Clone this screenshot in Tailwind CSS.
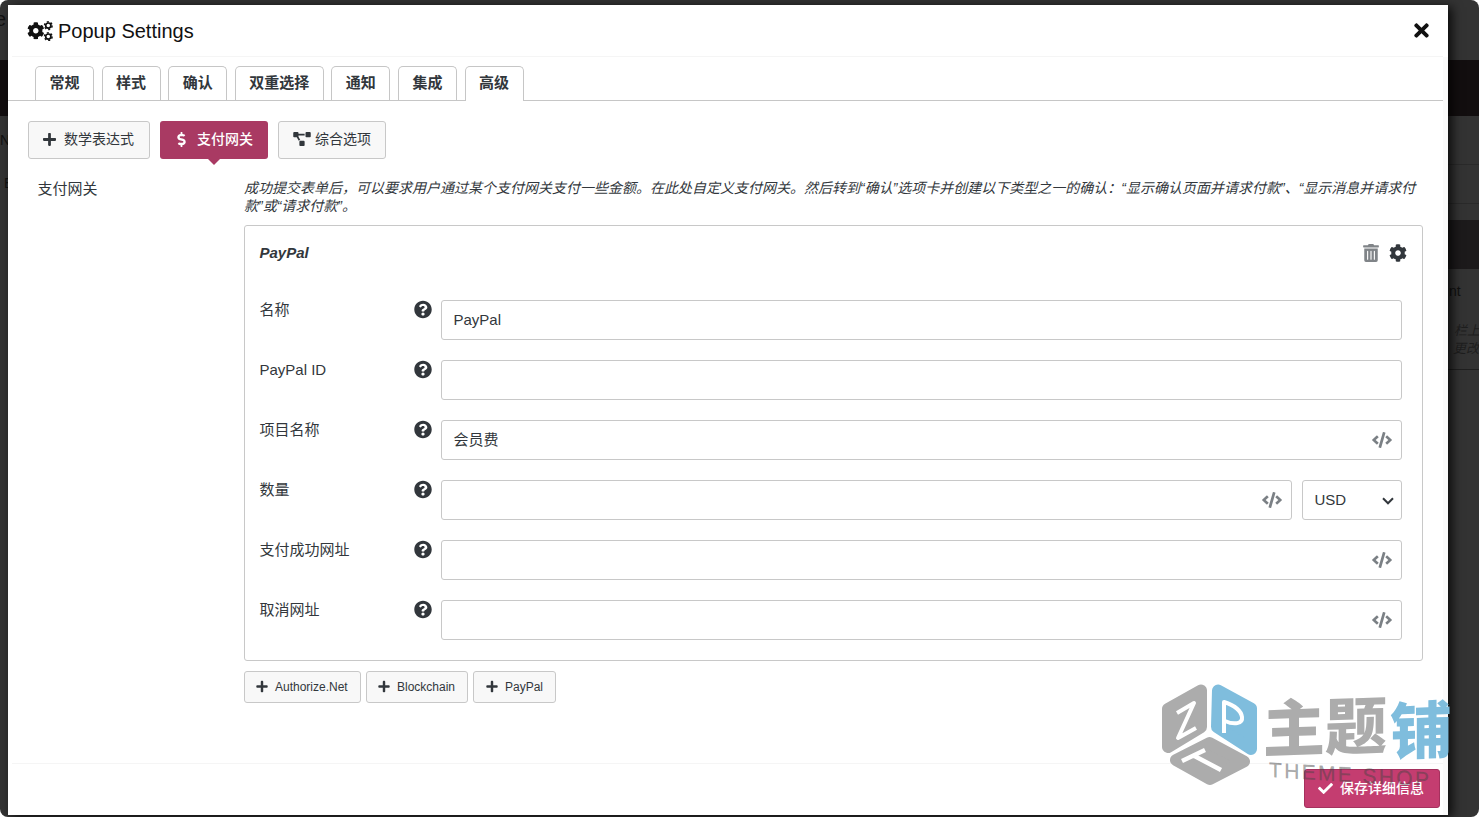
<!DOCTYPE html>
<html lang="zh-CN">
<head>
  <meta charset="UTF-8" />
  <meta name="viewport" content="width=device-width, initial-scale=1.0"/>
  <title>Popup Settings</title>
  <script src="https://cdn.jsdelivr.net/npm/@tailwindcss/browser@4"></script>
</head>
<body class="bg-white h-screen overflow-hidden text-[15px] text-[#32373c] font-['Liberation_Sans','Noto_Sans_CJK_SC',sans-serif]">

<!-- ICONS -->
<svg class="hidden" xmlns="http://www.w3.org/2000/svg">
  <symbol id="plus" viewBox="0 0 448 512"><path d="M416 208H272V64c0-17.67-14.33-32-32-32h-32c-17.67 0-32 14.33-32 32v144H32c-17.67 0-32 14.33-32 32v32c0 17.67 14.33 32 32 32h144v144c0 17.67 14.33 32 32 32h32c17.67 0 32-14.33 32-32V304h144c17.67 0 32-14.33 32-32v-32c0-17.67-14.33-32-32-32z"/></symbol>
  <symbol id="check" viewBox="0 0 512 512"><path d="M173.898 439.404l-166.4-166.4c-9.997-9.997-9.997-26.206 0-36.204l36.203-36.204c9.997-9.998 26.207-9.998 36.204 0L192 312.69 432.095 72.596c9.997-9.997 26.207-9.997 36.204 0l36.203 36.204c9.997 9.997 9.997 26.206 0 36.204l-294.4 294.401c-9.998 9.997-26.207 9.997-36.204-.001z"/></symbol>
  <symbol id="times" viewBox="0 0 352 512"><path d="M242.72 256l100.07-100.07c12.28-12.28 12.28-32.19 0-44.48l-22.24-22.24c-12.28-12.28-32.19-12.28-44.48 0L176 189.28 75.93 89.21c-12.28-12.28-32.19-12.28-44.48 0L9.21 111.45c-12.28 12.28-12.28 32.19 0 44.48L109.28 256 9.21 356.07c-12.28 12.28-12.28 32.19 0 44.48l22.24 22.24c12.28 12.28 32.2 12.28 44.48 0L176 322.72l100.07 100.07c12.28 12.28 32.2 12.28 44.48 0l22.24-22.24c12.28-12.28 12.28-32.19 0-44.48L242.72 256z"/></symbol>
  <symbol id="help" viewBox="0 0 512 512"><path d="M504 256c0 136.997-111.043 248-248 248S8 392.997 8 256C8 119.083 119.043 8 256 8s248 111.083 248 248zM262.655 90c-54.497 0-89.255 22.957-116.549 63.758-3.536 5.286-2.353 12.415 2.715 16.258l34.699 26.31c5.205 3.947 12.621 3.008 16.665-2.122 17.864-22.658 30.113-35.797 57.303-35.797 20.429 0 45.698 13.148 45.698 32.958 0 14.976-12.363 22.667-32.534 33.976C247.128 238.528 216 254.941 216 296v4c0 6.627 5.373 12 12 12h56c6.627 0 12-5.373 12-12v-1.333c0-28.462 83.186-29.647 83.186-106.667 0-58.002-60.165-102-116.531-102zM256 338c-25.365 0-46 20.635-46 46 0 25.364 20.635 46 46 46s46-20.636 46-46c0-25.365-20.635-46-46-46z"/></symbol>
  <symbol id="cog" viewBox="0 0 512 512"><path d="M487.4 315.7l-42.6-24.6c4.3-23.2 4.3-47 0-70.2l42.6-24.6c4.9-2.8 7.1-8.6 5.5-14-11.1-35.6-30-67.8-54.7-94.6-3.8-4.1-10-5.1-14.8-2.3L380.8 110c-17.9-15.4-38.5-27.3-60.8-35.1V25.8c0-5.6-3.9-10.5-9.4-11.7-36.7-8.2-74.3-7.8-109.2 0-5.5 1.2-9.4 6.1-9.4 11.7V75c-22.2 7.9-42.8 19.8-60.8 35.1L88.7 85.5c-4.9-2.8-11-1.9-14.8 2.3-24.7 26.7-43.6 58.9-54.7 94.6-1.7 5.4.6 11.2 5.5 14L67.3 221c-4.3 23.2-4.3 47 0 70.2l-42.6 24.6c-4.9 2.8-7.1 8.6-5.5 14 11.1 35.6 30 67.8 54.7 94.6 3.8 4.1 10 5.1 14.8 2.3l42.6-24.6c17.9 15.4 38.5 27.3 60.8 35.1v49.2c0 5.6 3.9 10.5 9.4 11.7 36.7 8.2 74.3 7.8 109.2 0 5.5-1.2 9.4-6.1 9.4-11.7v-49.2c22.2-7.9 42.8-19.8 60.8-35.1l42.6 24.6c4.9 2.8 11 1.9 14.8-2.3 24.7-26.7 43.6-58.9 54.7-94.6 1.5-5.5-.7-11.3-5.6-14.1zM256 336c-44.1 0-80-35.9-80-80s35.9-80 80-80 80 35.9 80 80-35.9 80-80 80z"/></symbol>
  <symbol id="dollar" viewBox="0 0 288 512"><path d="M209.2 233.4l-108-31.6C88.7 198.2 80 186.5 80 173.5c0-16.3 13.2-29.5 29.5-29.5h66.3c12.2 0 24.2 3.7 34.2 10.5 6.1 4.1 14.3 3.1 19.5-2l34.8-34c7.1-6.9 6.1-18.4-1.8-24.5C238 74.8 207.4 64.1 176 64V16c0-8.8-7.2-16-16-16h-32c-8.8 0-16 7.2-16 16v48h-2.5C45.8 64-5.4 118.7.5 183.6c4.2 46.1 39.4 83.6 83.8 96.6l102.5 30c12.5 3.7 21.2 15.3 21.2 28.3 0 16.3-13.2 29.5-29.5 29.5h-66.3C100 368 88 364.3 78 357.5c-6.1-4.1-14.3-3.1-19.5 2l-34.8 34c-7.1 6.9-6.1 18.4 1.8 24.5 24.5 19.2 55.1 29.9 86.5 30v48c0 8.8 7.2 16 16 16h32c8.8 0 16-7.2 16-16v-48.2c46.6-.9 90.3-28.6 105.7-72.7 21.5-61.6-14.6-124.8-72.5-141.7z"/></symbol>
  <symbol id="diagram" viewBox="0 0 640 512"><path d="M384 320H256c-17.67 0-32 14.33-32 32v128c0 17.67 14.33 32 32 32h128c17.67 0 32-14.33 32-32V352c0-17.67-14.33-32-32-32zM192 32c0-17.67-14.33-32-32-32H32C14.33 0 0 14.33 0 32v128c0 17.67 14.33 32 32 32h95.72l73.16 128.04C211.98 300.98 232.4 288 256 288h.28L192 175.51V128h224V64H192V32zM608 0H480c-17.67 0-32 14.33-32 32v128c0 17.67 14.33 32 32 32h128c17.67 0 32-14.33 32-32V32c0-17.67-14.33-32-32-32z"/></symbol>
  <symbol id="code" viewBox="0 0 640 512"><path d="M278.9 511.5l-61-17.7c-6.4-1.8-10-8.5-8.2-14.9L346.2 8.7c1.8-6.4 8.5-10 14.9-8.2l61 17.7c6.4 1.8 10 8.5 8.2 14.9L293.8 503.3c-1.9 6.4-8.5 10.1-14.9 8.2zm-114-112.2l43.5-46.4c4.6-4.9 4.3-12.7-.8-17.2L117 256l90.6-79.7c5.1-4.5 5.5-12.3.8-17.2l-43.5-46.4c-4.5-4.8-12.1-5.1-17-.5L3.8 247.2c-5.1 4.7-5.1 12.8 0 17.5l144.1 135.1c4.9 4.6 12.5 4.4 17-.5zm327.2.6l144.1-135.1c5.1-4.7 5.1-12.8 0-17.5L492.1 112.1c-4.8-4.5-12.4-4.3-17 .5L431.6 159c-4.6 4.9-4.3 12.7.8 17.2L523 256l-90.6 79.7c-5.1 4.5-5.5 12.3-.8 17.2l43.5 46.4c4.5 4.9 12.1 5.1 17 .6z"/></symbol>
  <symbol id="trash" viewBox="0 0 448 512"><path d="M32 464a48 48 0 0 0 48 48h288a48 48 0 0 0 48-48V128H32zm272-256a16 16 0 0 1 32 0v224a16 16 0 0 1-32 0zm-96 0a16 16 0 0 1 32 0v224a16 16 0 0 1-32 0zm-96 0a16 16 0 0 1 32 0v224a16 16 0 0 1-32 0zM432 32H312l-9.4-18.7A24 24 0 0 0 281.1 0H166.8a23.72 23.72 0 0 0-21.4 13.3L136 32H16A16 16 0 0 0 0 48v32a16 16 0 0 0 16 16h416a16 16 0 0 0 16-16V48a16 16 0 0 0-16-16z"/></symbol>
</svg>

<!-- DIMMED PAGE -->
<div class="relative h-[817px] rounded-lg bg-[#333] overflow-hidden pt-[5px] pl-2">
  <div class="absolute inset-x-0 top-[60px] h-14 bg-[#120e0f]"></div>
  <div class="absolute right-0 top-[164px] w-8 h-px bg-[#2a2a2a]"></div>
  <div class="absolute right-0 top-[203px] w-8 h-px bg-[#2a2a2a]"></div>
  <div class="absolute right-0 top-[220px] w-8 h-[49px] bg-[#1c1a1b]"></div>
  <div class="absolute right-0 top-[369px] w-8 h-px bg-[#1f1f1f]"></div>
  <span class="absolute -left-[5px] top-[7px] text-[20px] leading-6 text-[#111]">e</span>
  <span class="absolute left-0 top-[131px] text-[14px] leading-[18px] text-[#111]">N</span>
  <span class="absolute left-[4px] top-[174px] text-[14px] leading-[18px] text-[#111]">E</span>
  <span class="absolute left-[1449px] top-[282px] text-[14px] leading-[18px] text-[#111]">nt</span>
  <span class="absolute left-[1454px] top-[322px] w-10 text-[13px] leading-[18px] text-[#1e1e1e] italic">栏上</span>
  <span class="absolute left-[1453px] top-[340px] w-10 text-[13px] leading-[18px] text-[#1e1e1e] italic">更改</span>

  <!-- MODAL -->
  <div class="relative w-[1440px] h-[810px] bg-white flex flex-col shadow-[4px_2px_10px_rgba(0,0,0,0.8)]">
    <header class="h-[52px] shrink-0 ml-1 mr-[5px] border-b border-[#f5f5f5] flex items-center pl-[15px] pr-[14px] text-[#111]">
      <svg class="w-[26px] h-5 fill-current" viewBox="0 0 26 20">
        <use href="#cog" x="0" y="1" width="17.6" height="17.600"/>
        <g id="small-cog" fill="none" stroke="currentColor">
          <circle cx="21.300" cy="4.600" r="2.600" stroke-width="1.700"/>
          <circle cx="21.300" cy="4.600" r="3.800" stroke-width="1.500" stroke-dasharray="1.990 1.990"/>
        </g>
        <use href="#small-cog" y="11"/>
      </svg>
      <h1 class="ml-[5px] text-[20px] leading-6">Popup Settings</h1>
      <svg class="ml-auto w-[15px] h-[21px] fill-current"><use href="#times"/></svg>
    </header>

    <!-- TABS -->
    <nav class="h-11 shrink-0 mr-[5px] pt-[9px] pl-[27px] border-b border-[#c6c6c6] flex gap-[7.6px] font-bold leading-[32px] text-center">
      <a class="w-[59px] h-[34px] border border-b-0 border-[#c6c6c6] rounded-t-[5px]">常规</a>
      <a class="w-[59px] h-[34px] border border-b-0 border-[#c6c6c6] rounded-t-[5px]">样式</a>
      <a class="w-[59px] h-[34px] border border-b-0 border-[#c6c6c6] rounded-t-[5px]">确认</a>
      <a class="w-[89px] h-[34px] border border-b-0 border-[#c6c6c6] rounded-t-[5px]">双重选择</a>
      <a class="w-[59px] h-[34px] border border-b-0 border-[#c6c6c6] rounded-t-[5px]">通知</a>
      <a class="w-[59px] h-[34px] border border-b-0 border-[#c6c6c6] rounded-t-[5px]">集成</a>
      <a class="w-[59px] h-[35px] border border-b-0 border-[#c6c6c6] rounded-t-[5px] bg-white">高级</a>
    </nav>

    <main class="h-[663px] shrink-0 ml-1 border-b border-[#f5f5f5] pl-4 pt-5 pr-[25px]">
      <div class="flex gap-[10px] h-[38px] text-[14px]">
        <button class="w-[122px] border border-[#c8c8c8] rounded-[3px] bg-[#f8f8f8] flex items-center pl-[14px] pb-[2px]">
          <svg class="w-[13px] h-[15px] fill-current mr-2"><use href="#plus"/></svg>数学表达式
        </button>
        <button class="relative w-[108px] rounded-[3px] bg-[#a93a63] text-white font-medium flex items-center pl-[17px] pb-[2px]">
          <svg class="w-[9px] h-[15px] fill-current mr-[11px]"><use href="#dollar"/></svg>支付网关
          <span class="absolute left-12 top-[38px] border-x-[6px] border-t-[6px] border-x-transparent border-t-[#a93a63]"></span>
        </button>
        <button class="w-[108px] border border-[#c8c8c8] rounded-[3px] bg-[#f8f8f8] flex items-center pl-[14px] pb-[2px]">
          <svg class="w-[18px] h-[14px] fill-current mr-1"><use href="#diagram"/></svg>综合选项
        </button>
      </div>

      <div class="flex pt-5">
        <div class="w-[216px] shrink-0 pl-[9.5px] pt-px leading-[18px]">支付网关</div>
        <div class="w-[1179px] shrink-0">
          <p class="text-[14px] leading-[18px] italic">成功提交表单后，可以要求用户通过某个支付网关支付一些金额。在此处自定义支付网关。然后转到“确认”选项卡并创建以下类型之一的确认：“显示确认页面并请求付款”、“显示消息并请求付款”或“请求付款”。</p>

          <!-- PAYPAL GATEWAY -->
          <section class="mt-[10px] h-[436px] border border-[#c8c8c8] rounded-[3px] pl-[14.5px] pr-5">
            <div class="h-[74px] pt-[18px] flex items-start">
              <h2 class="font-bold italic leading-[18px]">PayPal</h2>
              <svg class="ml-auto w-4 h-[18px] fill-[#808488]"><use href="#trash"/></svg>
              <svg class="ml-[10px] -mr-[4.500px] w-[18px] h-[18px] fill-current"><use href="#cog"/></svg>
            </div>
            <div class="flex flex-col gap-5">
              <div class="flex h-10">
                <label class="w-[154px] pt-px leading-[18px]">名称</label>
                <svg class="w-[18px] h-[19px] fill-current mr-[9.5px]"><use href="#help"/></svg>
                <div class="flex-1 border border-[#c8c8c8] rounded-[3px] flex items-center px-[11.5px]">PayPal</div>
              </div>
              <div class="flex h-10">
                <label class="w-[154px] pt-px leading-[18px]">PayPal ID</label>
                <svg class="w-[18px] h-[19px] fill-current mr-[9.5px]"><use href="#help"/></svg>
                <div class="flex-1 border border-[#c8c8c8] rounded-[3px]"></div>
              </div>
              <div class="flex h-10">
                <label class="w-[154px] pt-px leading-[18px]">项目名称</label>
                <svg class="w-[18px] h-[19px] fill-current mr-[9.5px]"><use href="#help"/></svg>
                <div class="flex-1 border border-[#c8c8c8] rounded-[3px] flex items-center pl-[11.5px] pr-[9.5px]">会员费
                  <svg class="ml-auto w-5 h-4 fill-[#7b8085]"><use href="#code"/></svg>
                </div>
              </div>
              <div class="flex h-10">
                <label class="w-[154px] pt-px leading-[18px]">数量</label>
                <svg class="w-[18px] h-[19px] fill-current mr-[9.5px]"><use href="#help"/></svg>
                <div class="flex-1 border border-[#c8c8c8] rounded-[3px] flex items-center pr-[9.5px]">
                  <svg class="ml-auto w-5 h-4 fill-[#7b8085]"><use href="#code"/></svg>
                </div>
                <div class="ml-[10px] w-[100px] border border-[#c8c8c8] rounded-[3px] flex items-center pl-[11.5px] pr-[7px] pt-px">USD
                  <svg class="ml-auto w-3 h-2 fill-none stroke-current stroke-2" viewBox="0 0 12 8"><path d="M1 1.300l5 5 5-5"/></svg>
                </div>
              </div>
              <div class="flex h-10">
                <label class="w-[154px] pt-px leading-[18px]">支付成功网址</label>
                <svg class="w-[18px] h-[19px] fill-current mr-[9.5px]"><use href="#help"/></svg>
                <div class="flex-1 border border-[#c8c8c8] rounded-[3px] flex items-center pr-[9.5px]">
                  <svg class="ml-auto w-5 h-4 fill-[#7b8085]"><use href="#code"/></svg>
                </div>
              </div>
              <div class="flex h-10">
                <label class="w-[154px] pt-px leading-[18px]">取消网址</label>
                <svg class="w-[18px] h-[19px] fill-current mr-[9.5px]"><use href="#help"/></svg>
                <div class="flex-1 border border-[#c8c8c8] rounded-[3px] flex items-center pr-[9.5px]">
                  <svg class="ml-auto w-5 h-4 fill-[#7b8085]"><use href="#code"/></svg>
                </div>
              </div>
            </div>
          </section>

          <div class="mt-[10px] h-8 flex gap-[5px] text-[12px]">
            <button class="w-[117px] border border-[#c8c8c8] rounded-[3px] bg-[#f8f8f8] flex items-center pl-[11px] pb-px">
              <svg class="w-3 h-[13px] fill-current mr-[7px]"><use href="#plus"/></svg>Authorize.Net
            </button>
            <button class="w-[102px] border border-[#c8c8c8] rounded-[3px] bg-[#f8f8f8] flex items-center pl-[11px] pb-px">
              <svg class="w-3 h-[13px] fill-current mr-[7px]"><use href="#plus"/></svg>Blockchain
            </button>
            <button class="w-[83px] border border-[#c8c8c8] rounded-[3px] bg-[#f8f8f8] flex items-center pl-3 pb-px">
              <svg class="w-3 h-[13px] fill-current mr-[7px]"><use href="#plus"/></svg>PayPal
            </button>
          </div>
        </div>
      </div>
    </main>

    <footer class="flex justify-end pt-[5px] pr-2">
      <button class="w-[136px] h-[39px] border border-[#a5315e] rounded-[3px] bg-[#c43d70] text-white text-[14px] font-medium flex items-center pl-[13px]">
        <svg class="w-[15px] h-[15px] fill-current mr-[7px]"><use href="#check"/></svg>保存详细信息
      </button>
    </footer>

    <div class="absolute right-0 top-[52px] w-[5px] h-[758px] bg-[#fafafa]"></div>
  </div>

  <!-- WATERMARK -->
  <svg class="absolute left-[1150px] top-[670px] w-[329px] h-[147px] pointer-events-none" viewBox="0 0 329 147">
    <g stroke-linejoin="round" stroke-width="12">
      <path class="fill-[#acacac] stroke-[#acacac]" d="M51 20.500V57L18 77V39z"/>
      <path class="fill-[#7fbddd] stroke-[#7fbddd]" d="M68 20.500l33 18V79L67 57z"/>
      <path class="fill-[#acacac] stroke-[#acacac]" d="M59.500 73L94 91.500 60 109 26 90z"/>
    </g>
    <g class="fill-none stroke-white" stroke-width="4" stroke-linejoin="round">
      <path d="M27 43l17-10-16 35 18-10"/>
      <path d="M74 63V32c9 3 17 8 18 15s-8 8-17 4"/>
      <path stroke-width="4.500" d="M32 91l23-11M43.500 85.500L71 100"/>
    </g>
    <g class="font-['Noto_Sans_CJK_SC',sans-serif] font-black" font-size="62" transform="skewY(-2)">
      <text class="fill-[#acacac]" x="113" y="86">主题</text>
      <text class="fill-[#7fbddd]" x="240" y="93">铺</text>
    </g>
    <text class="fill-[#444]/45 font-['Liberation_Sans',sans-serif]" font-size="21" stroke="#444" stroke-opacity=".2" stroke-width=".6" textLength="160" transform="translate(119 107) skewY(3.500)">THEME SHOP</text>
  </svg>
</div>

</body>
</html>
